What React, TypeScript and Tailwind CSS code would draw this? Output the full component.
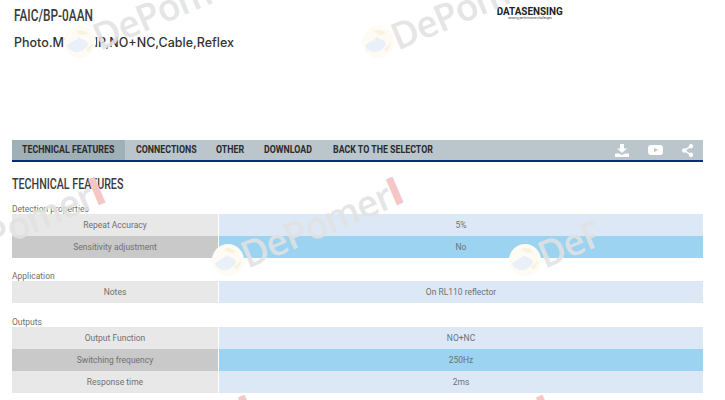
import type { ReactNode } from "react";

const sections = [
  {
    title: "Detection properties",
    gap: "mt-[9px]",
    rows: [
      { name: "Repeat Accuracy", value: "5%" },
      { name: "Sensitivity adjustment", value: "No", dark: true },
    ],
  },
  {
    title: "Application",
    gap: "mt-[11px]",
    rows: [{ name: "Notes", value: "On RL110 reflector" }],
  },
  {
    title: "Outputs",
    gap: "mt-3",
    rows: [
      { name: "Output Function", value: "NO+NC" },
      { name: "Switching frequency", value: "250Hz", dark: true },
      { name: "Response time", value: "2ms" },
    ],
  },
];

const marks = [
  { x: -70, y: 260, key: "a" },
  { x: 80, y: 42, key: "b" },
  { x: 378, y: 42, key: "c" },
  { x: 228, y: 260, key: "d" },
  { x: 525, y: 260, key: "e" },
  { x: 80, y: 478, key: "f" },
  { x: 378, y: 478, key: "g" },
];

function NavItem({ width, children }: { width: string; children: ReactNode }) {
  return (
    <a className={`flex items-center ${width}`}>
      <span className="origin-left scale-x-[0.84] whitespace-nowrap">{children}</span>
    </a>
  );
}

function Watermark({ x, y }: { x: number; y: number }) {
  return (
    <div className="absolute" style={{ left: x, top: y }}>
      <svg className="absolute left-[-16px] top-[-16px]" width="32" height="32" viewBox="0 0 32 32">
        <circle cx="16" cy="16" r="16" fill="#fdfbf3" />
        <path d="M3 20c4-5 9-5 12-9 3 3 7 2 9 7-2 5-8 9-13 8-4-1-7-3-8-6Z" fill="#e9f0f8" />
        <path d="M12 5c4-2 9-1 12 3-3 1-8 2-12-3Z" fill="#f8f2de" />
        <path d="M22 22c3-1 5-3 7-6 0 4-2 8-5 10Z" fill="#f9f2e0" />
      </svg>
      <div className="absolute left-[14px] top-[-23px] origin-left -rotate-[23deg] whitespace-nowrap font-['Open_Sans',sans-serif] text-[37px] leading-none font-semibold tracking-tight text-[#e2e2e2]/90">
        DePomer<span className="font-extrabold text-[#f5c6c6]">l</span>
      </div>
    </div>
  );
}

export default function App() {
  return (
    <div className="relative h-[400px] w-[725px] overflow-hidden bg-white font-['Roboto',sans-serif]">
      <div className="flex h-[140px] items-start justify-between pr-[161px] pl-[14px]">
        <div>
          <h1 className="mt-[7px] origin-left scale-x-[0.74] text-[16px] leading-[18px] font-medium whitespace-nowrap text-[#3a3a3a]">
            FAIC/BP-0AAN
          </h1>
          <p className="mt-[9px] font-['Inter',sans-serif] text-[12.5px] leading-[18px] font-medium text-[#333]">
            Photo.M18,PNP,NO+NC,Cable,Reflex
          </p>
        </div>
        <div className="mt-[6px] flex w-[68px] flex-col items-center">
          <span className="origin-center scale-x-[0.9] text-[11px] leading-[11px] font-bold whitespace-nowrap text-[#222]">
            DATASENSING
          </span>
          <span className="text-[3px] leading-[3px] whitespace-nowrap text-[#444]">
            sensing performance challenges
          </span>
        </div>
      </div>

      <nav className="mr-[22px] ml-3 flex h-[22px] items-stretch border-b-2 border-[#0b2a80] bg-[#bac6cc] text-[10.5px] font-bold text-[#2b2b2b]">
        <a className="flex w-[113px] items-center bg-[#9fb0b7] pl-[10px]">
          <span className="origin-left scale-x-[0.84] whitespace-nowrap">TECHNICAL FEATURES</span>
        </a>
        <div className="ml-[11px] flex gap-5">
          <NavItem width="w-[60px]">CONNECTIONS</NavItem>
          <NavItem width="w-[28px]">OTHER</NavItem>
          <NavItem width="w-[49px]">DOWNLOAD</NavItem>
          <NavItem width="w-[100px]">BACK TO THE SELECTOR</NavItem>
        </div>
        <div className="ml-auto flex items-center gap-[19px] pr-[10px]">
          <svg width="14" height="13" viewBox="0 0 14 13" fill="#fff">
            <path d="M5 0h4v4.5h3L7 9 2 4.5h3Z" />
            <path d="M0 9.5h4L7 11l3-1.5h4V13H0Z" />
          </svg>
          <svg width="15" height="10" viewBox="0 0 15 10">
            <rect width="15" height="10" rx="3" fill="#fff" />
            <path d="M6 3 10 5 6 7Z" fill="#bac6cc" />
          </svg>
          <svg width="11" height="13" viewBox="0 0 11 13" fill="#fff" stroke="#fff">
            <circle cx="9" cy="2.2" r="1.8" />
            <circle cx="2.2" cy="6.5" r="1.8" />
            <circle cx="9" cy="10.8" r="1.8" />
            <path d="M9 2.2 2.2 6.5 9 10.8" fill="none" strokeWidth="1.5" />
          </svg>
        </div>
      </nav>

      <main className="mr-[22px] ml-3">
        <h2 className="mt-[13px] origin-left scale-x-[0.69] text-[15.5px] leading-[18px] font-medium whitespace-nowrap text-[#3a3a3a]">
          TECHNICAL FEATURES
        </h2>
        {sections.map((section) => (
          <section key={section.title} className={section.gap}>
            <h3 className="h-3 pt-px text-[8.5px] leading-[12px] text-[#707070]">{section.title}</h3>
            {section.rows.map((row) => (
              <div key={row.name} className="flex h-[22px] items-center pb-0 text-center text-[8.5px] text-[#707070]">
                <div className={`flex h-full w-[207px] items-center justify-center border-r border-white pt-px ${row.dark ? "bg-[#c9c9c9]" : "bg-[#e8e8e8]"}`}>
                  {row.name}
                </div>
                <div className={`flex h-full flex-1 items-center justify-center pt-px ${row.dark ? "bg-[#9bd3f0]" : "bg-[#dce8f6]"}`}>
                  {row.value}
                </div>
              </div>
            ))}
          </section>
        ))}
      </main>

      <div className="pointer-events-none absolute inset-y-0 left-0 w-[595px] overflow-hidden">
        {marks.map((m) => (
          <Watermark key={m.key} x={m.x} y={m.y} />
        ))}
      </div>
    </div>
  );
}
